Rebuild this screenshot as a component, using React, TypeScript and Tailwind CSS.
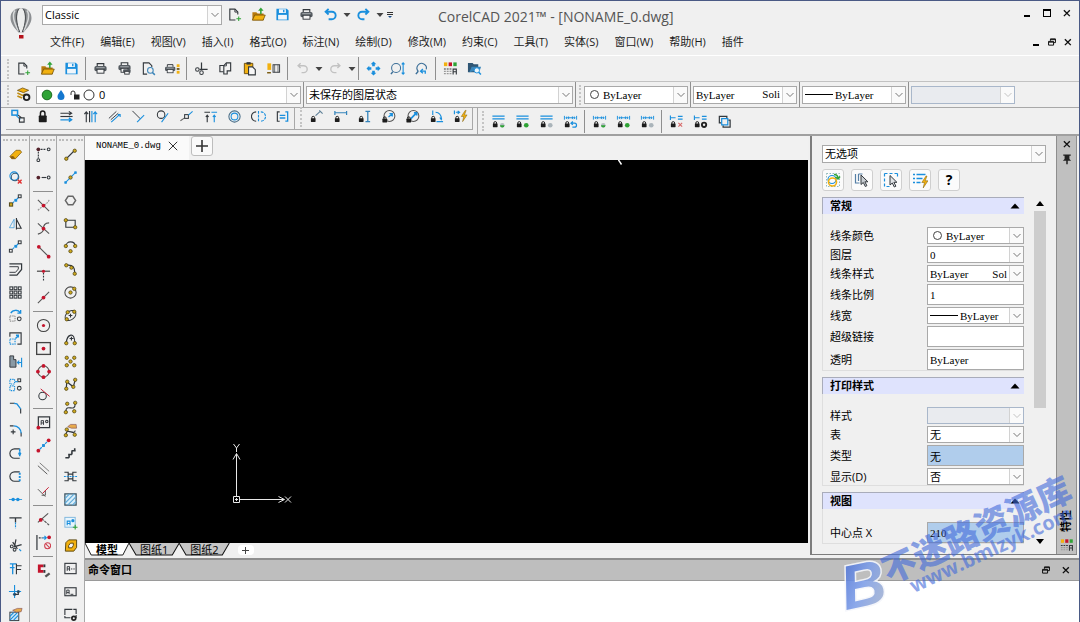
import React from "react";

const K = "#33383d";
const B = "#1a8fdd";
const G = "#2fa336";
const Y = "#f2b110";
const R = "#c4142c";

type StrokeProps = {
  d: string;
  c?: string;
  w?: number;
  f?: string;
  dash?: string;
};

const S = ({ d, c = K, w = 1.2, f = "none", dash }: StrokeProps) => (
  <path d={d} stroke={c} strokeWidth={w} fill={f} strokeDasharray={dash} />
);

const Dot = ({ x, y, c = R, r = 1.7 }: { x: number; y: number; c?: string; r?: number }) => (
  <circle cx={x} cy={y} r={r} fill={c} />
);

// gold grip used by the draw tools
const Au = ({ x, y }: { x: number; y: number }) => (
  <circle cx={x} cy={y} r={1.8} fill="#d0a91c" stroke="#4d4417" strokeWidth={0.8} />
);

const Ring = ({ x, y, c = K, r = 1.6 }: { x: number; y: number; c?: string; r?: number }) => (
  <circle cx={x} cy={y} r={r} fill="none" stroke={c} strokeWidth={1.1} />
);

const Lock = ({ x, y }: { x: number; y: number }) => (
  <g>
    <rect x={x} y={y + 2.4} width={5} height={4} rx={0.5} fill="#1d1d1d" />
    <path d={`M${x + 1} ${y + 3}v-1.2a1.5 1.5 0 0 1 3 0v1.2`} stroke="#1d1d1d" strokeWidth={1} fill="none" />
  </g>
);

const Sq = ({ x, y, c = K, s = 3 }: { x: number; y: number; c?: string; s?: number }) => (
  <rect x={x} y={y} width={s} height={s} fill="none" stroke={c} strokeWidth={1.1} />
);

const printer = (
  <>
    <S d="M4.5 5.5V2.8h7v2.7" />
    <rect x="1.5" y="5.3" width="13" height="5.6" rx="1.8" fill="#555b61" />
    <rect x="4.3" y="8.8" width="7.4" height="4.2" fill="#f4f4f4" stroke={K} />
    <S d="M3.5 7.2h9" c="#c9ced2" w={0.8} />
  </>
);

const half = (
  <>
    <circle cx="12" cy="12" r="2.4" fill="#b5bcc1" />
    <path d="M9.6 12a2.4 2.4 0 0 0 4.8 0z" fill={G} />
  </>
);

const dims = <S d="M1.5 2v4M14.5 2v4M3 4h10M6 2.6v2.8M10 2.6v2.8M4.4 2.8 3 4l1.4 1.2M11.6 2.8 13 4l-1.4 1.2" c={B} w={1} />;
const lines = <S d="M1.5 2.2h13M1.5 5.2h13" c={B} w={1.3} />;
const tree = <S d="M1.5 1.5v5M2 4h5M9.5 2.5h5M9.5 5.5h5" c={B} />;
const bolt = <path d="M13 1.5 8.8 8h2.6l-1.2 5.5L15 6.3h-2.8l1.8-4.8z" fill={Y} stroke="#7a5a08" strokeWidth={0.5} />;

const icons: Record<string, React.ReactNode> = {
  new: (
    <>
      <S d="M9 13.8H3V2.2h5.5l3 3V8" />
      <S d="M8.4 2.4v3h3" w={1} />
      <S d="M12.5 10v5M10 12.5h5" c={G} w={1.1} />
    </>
  ),
  open: (
    <>
      <path d="M1.5 14V5.5h4.2l1.3 1.4h6.5V14z" fill="#b87a0c" />
      <path d="M1.5 14 4 8.6h11.2L13 14z" fill={Y} stroke="#6b4c0c" strokeWidth={0.8} />
      <S d="M10.5 7.5V3" c={G} w={1.6} />
      <path d="M7.6 4 10.5.4 13.4 4z" fill={G} />
    </>
  ),
  save: (
    <>
      <path d="M1.5 1.8h11l2 2v10.4h-13z" fill={B} />
      <rect x="4.2" y="2.4" width="7.4" height="4" fill="#f0f6fb" />
      <rect x="8.6" y="3" width="1.5" height="2.6" fill={B} />
      <rect x="3.3" y="8.4" width="9.4" height="5" fill="#f0f6fb" />
    </>
  ),
  print: printer,
  batchprint: (
    <>
      <g transform="translate(0 -1)">{printer}</g>
      <rect x="6.5" y="8.8" width="8" height="3.8" rx="1" fill="#555b61" />
      <rect x="8.2" y="11" width="4.8" height="3" fill="#f4f4f4" stroke={K} />
    </>
  ),
  preview: (
    <>
      <S d="M6.5 14H2.5V2h6l3 3v1.5" />
      <Ring x={10} y={10} r={3} c="#3b84b8" />
      <S d="M12.2 12.2l2.6 2.6" c="#3b84b8" w={1.6} />
    </>
  ),
  printset: (
    <>
      <g transform="translate(-1.3 1.5) scale(.85)">{printer}</g>
      <rect x="12.5" y="3.5" width="3" height="3" fill={Y} />
      <rect x="12.5" y="7.5" width="3" height="2" fill="#6d5a28" />
      <rect x="12.5" y="10.5" width="3" height="3" fill={Y} />
    </>
  ),
  cut: (
    <>
      <S d="M8 1.5v8.2M6 9h8.5" w={1.3} />
      <Ring x={3.6} y={9} r={1.9} />
      <Ring x={8} y={12.4} r={1.9} />
    </>
  ),
  copy: (
    <>
      <S d="M6 11.5H2V4.8h4.4" />
      <S d="M6.2 13.8V5l2.8-3h4.5v8.5H9.8v3.3z" f="#f3f3f3" />
      <S d="M6.4 5.2H9V2.4" w={0.9} />
    </>
  ),
  paste: (
    <>
      <path d="M2.5 2.5h9v11h-9z" fill={Y} stroke="#6b4c0c" />
      <rect x="4.8" y="1.2" width="4.4" height="2.6" fill={K} />
      <S d="M7 6.2h4.2l3 3v5.6H7z" f="#f7f7f7" />
    </>
  ),
  paint: (
    <>
      <path d="M1.5 2.5h4v7h-4z" fill={Y} />
      <S d="M1.2 12.5h4" c="#7c5d13" w={1.6} />
      <rect x="7.5" y="4" width="7" height="8" fill="#eee" stroke={K} />
      <S d="M9.2 4v8M12.8 4v8" w={0.7} />
    </>
  ),
  undo: <S d="M6 2 2.8 5 6 8M3 5h6.5a4 4 0 0 1 0 8H6" c={B} w={2} />,
  redo: <S d="M10 2l3.2 3L10 8M13 5H6.5a4 4 0 0 0 0 8H9" c={B} w={2} />,
  undoOff: <S d="M6 2.5 3.3 5 6 7.5M3.3 5h6a3.6 3.6 0 0 1 0 7.4H7" c="#c2c2c2" w={1.5} />,
  redoOff: <S d="M10 2.5 12.7 5 10 7.5M12.7 5h-6a3.6 3.6 0 0 0 0 7.4H9" c="#c2c2c2" w={1.5} />,
  pan: (
    <path
      d="M8 .5l3 3H9.4v2.200H6.600V3.500H5zM8 15.500l-3-3h1.600v-2.200h2.800v2.200H11zM.5 8l3-3v1.600h2.200v2.800H3.500V11zM15.500 8l-3-3v1.600h-2.200v2.800h2.200V11z"
      fill={B}
    />
  ),
  zoomdyn: (
    <>
      <Ring x={6.5} y={7.5} r={4.8} c="#3c6f98" />
      <S d="M3 11.5 1 14" c="#3c6f98" w={1.6} />
      <S d="M14 2v12M12.5 3.5 14 2l1.5 1.5M12.5 12.5 14 14l1.500-1.500" c={B} />
    </>
  ),
  zoomprev: (
    <>
      <S d="M13 9A5 5 0 1 0 4.6 11" c="#3c6f98" />
      <S d="M4.5 11 2 14" c="#3c6f98" w={1.6} />
      <S d="M9.5 8.5 7 10.8 9.500 13M7.200 10.800H12v2.700" c={B} w={1.4} />
    </>
  ),
  props: (
    <>
      <rect x="1" y="1.5" width="3.6" height="4" fill={Y} />
      <rect x="6" y="1.5" width="3.6" height="4" fill={R} />
      <rect x="11" y="1.5" width="3.6" height="4" fill={G} />
      <S d="M1 8.5h8" dash="2 1" />
      <S d="M1 11h8M1 13.5h8" c="#999" dash="2 1" />
      <S d="M10.8 14.5V8.600h3.400v5.900M10.800 11.500h3.400" />
    </>
  ),
  explorer: (
    <>
      <path d="M1 12V2h5l1.2 1.500H12V7l-3 5z" fill="#2f5674" />
      <path d="M2.500 12 5 6h10l-1 3" fill="#3a86bb" />
      <circle cx="10.5" cy="10" r="2.8" fill="#eef6fb" stroke={B} />
      <S d="M12.500 12l2.300 2.500" c={B} w={1.6} />
    </>
  ),
  layers: (
    <>
      <path d="M7 1l6.500 2.500L8 6 1.500 3.600z" fill={Y} stroke="#6b4c0c" strokeWidth={0.8} />
      <S d="M1.500 6.500 7 9l3-1.200M1.500 9.500l5 2.300" c="#c08d12" w={1.8} />
      <circle cx="11.3" cy="11" r="3" fill="#eee" stroke="#222" strokeWidth={2} />
    </>
  ),
  gcoin: (
    <>
      <rect x="1" y="1.5" width="6" height="5" fill="none" stroke={B} strokeWidth={1.6} />
      <S d="M5 6.500 10 11" c={B} />
      <S d="M9 9.500h5v4.500H9zM7.500 6.500l4 3" />
    </>
  ),
  gfix: (
    <>
      <rect x="4" y="7" width="8.5" height="7" rx="0.8" fill="#1d1d1d" />
      <S d="M5.800 7.500V4.600a2.400 2.400 0 0 1 4.800 0v2.900" c="#1d1d1d" w={1.6} />
    </>
  ),
  ghor: (
    <>
      <S d="M1.500 4.500h12M10.500 2.500l3 2-3 2" />
      <S d="M1.500 8h13" />
      <S d="M1.500 11.500h12M10.500 9.500l3 2-3 2" c={B} w={1.4} />
    </>
  ),
  gver: (
    <>
      <S d="M3.500 14V3M1.500 5.500l2-2.500 2 2.500M7 2v12" />
      <S d="M9.500 2v12M13 14V3M11 5.500 13 3l2 2.500" c={B} />
    </>
  ),
  gpar: (
    <>
      <S d="M2 10 10 2.500M4 11.500l8-7" w={1} />
      <S d="M4.500 14 14 5.500M11.500 6H14v2.500" c={B} />
    </>
  ),
  gperp: (
    <>
      <S d="M1.500 2l8.500 8.500" w={1} />
      <S d="M6.500 14 14 6.500" c={B} />
    </>
  ),
  gtan: (
    <>
      <Ring x={6.5} y={6} r={4} />
      <S d="M7 14 14 4.500" c={B} />
    </>
  ),
  gsmooth: (
    <>
      <S d="M1.500 12.500 6 9.500" c="#666" />
      <Sq x={6} y={6} s={4} />
      <S d="M10 6.500 14.500 2.500" c={B} />
    </>
  ),
  gcol: (
    <>
      <S d="M1.500 3.500h6M4.500 14V6.500M3 8.500l1.500-2L6 8.500" />
      <S d="M9 3.500h6M12 14V6.500M10.500 8.500l1.500-2 1.500 2" c={B} />
    </>
  ),
  gconc: (
    <>
      <Ring x={8} y={8} r={6} c="#456b86" />
      <Ring x={8} y={8} r={3.6} c={B} />
    </>
  ),
  gsym: (
    <>
      <S d="M5.500 3A5 5 0 0 0 5.500 13" />
      <S d="M10.500 3a5 5 0 0 1 0 10M8 2v12" c={B} dash="3 1" />
    </>
  ),
  gequal: (
    <>
      <S d="M5 3H2.500v10H5" />
      <S d="M11 3h2.500v10H11M5 6.800h6M5 9.600h6" c={B} w={1.4} />
    </>
  ),
  calign: (
    <>
      <Lock x={2} y={7.5} />
      <S d="M7 7l5-4.500M11 1.500l3.500 3.500" c="#5d7f97" />
    </>
  ),
  clin: (
    <>
      <S d="M2 2v4.500M14.500 2v4.500M2 4h12.500" c="#3584bb" w={1.3} />
      <Lock x={2} y={7.5} />
    </>
  ),
  cvert: (
    <>
      <Lock x={2} y={7.5} />
      <S d="M9 2.500h5M9 13.500h5M11.500 2.500v11" c="#3584bb" w={1.4} />
    </>
  ),
  crad: (
    <>
      <Ring x={9} y={7.5} r={5.8} c="#555" />
      <S d="M8 8.500l3.500-3M9 5h3v3" c={B} w={1.4} />
      <Lock x={1.5} y={8} />
    </>
  ),
  cdia: (
    <>
      <Ring x={9} y={7.5} r={5.8} c="#555" />
      <S d="M6 10.500l6-6M9.500 4h3v3" c={B} w={1.8} />
      <Lock x={1.5} y={8} />
    </>
  ),
  cang: (
    <>
      <S d="M4 1.500v5M7 3.500c4 0 6 3 6.500 7.500M11.500 9l2 3M8 13.500h7" c={B} />
      <Lock x={2} y={7.5} />
    </>
  ),
  cconv: (
    <>
      <S d="M1.500 1.500v4M3 3.500h4M5 2l2 1.500L5 5" c={B} />
      <Lock x={2} y={7.5} />
      {bolt}
    </>
  ),
  l1: <>{lines}<Lock x={2} y={7.8} />{half}</>,
  l2: <>{lines}<Lock x={2} y={7.8} /><Dot x={12} y={12} c={G} r={2.5} /></>,
  l3: <>{lines}<Lock x={2} y={7.8} /><Dot x={12} y={12} c="#aab4ba" r={2.5} /></>,
  l4: <>{dims}<Lock x={2} y={7.8} /><S d="M10.500 8 8.500 9.800l2 1.800M8.800 9.800h3.500a2 2 0 0 1 0 4.200H10" c={B} w={1.3} /></>,
  d1: <>{dims}<Lock x={2} y={7.8} />{half}</>,
  d2: <>{dims}<Lock x={2} y={7.8} /><Dot x={12} y={12} c={G} r={2.5} /></>,
  d3: <>{dims}<Lock x={2} y={7.8} /><Dot x={12} y={12} c="#aab4ba" r={2.5} /></>,
  x1: <>{tree}<Lock x={2} y={7.8} /><S d="M10 9.500l4 4M14 9.500l-4 4" c="#d76a6a" /></>,
  x2: <>{tree}<Lock x={2} y={7.8} /><circle cx="11.8" cy="11.5" r="2.3" fill="#eee" stroke="#222" strokeWidth={2} /></>,
  x3: (
    <>
      <S d="M4.500 9.500H2.500v-7h8v2" w={1.3} />
      <S d="M12 6.500h2v7.500H6.500v-2" w={1.3} />
      <S d="M5 5h6.500v6.500H5z" c={B} w={1.3} />
    </>
  ),
  // modify column
  erase: (
    <>
      <path d="M2 10 8.500 3.500h4.500l1.500 2L8 12.500H4z" fill={Y} stroke="#7b5a10" strokeWidth={0.8} />
      <path d="M2 10l2 2.500h4l-2.500-3z" fill="#8a5c0c" />
    </>
  ),
  dup: (
    <>
      <Ring x={6.5} y={6.5} r={4.5} c={B} />
      <Ring x={7.5} y={7.5} r={4} c="#345d7a" />
      <S d="M10.500 10.500l4 4M14.500 10.500l-4 4" c="#e03030" w={1.5} />
    </>
  ),
  move: (
    <>
      <rect x="1.5" y="10.5" width="3.5" height="3.5" fill="#d0a91c" stroke="#4d4417" />
      <S d="M5 10.500 11 5" c={B} dash="2 1" />
      <rect x="6.8" y="6.3" width="3" height="3" fill={B} />
      <Sq x={11} y={2} />
    </>
  ),
  mirror: (
    <>
      <S d="M6.500 3.500v9h-5z" c="#4da3dc" w={0.9} />
      <S d="M9 2v12.500" />
      <S d="M9 3.500l5 9.500H9" />
    </>
  ),
  copyent: (
    <>
      <Sq x={1.5} y={11} />
      <S d="M5 10.500 11 5" c={B} dash="2 1" />
      <rect x="6.8" y="6.3" width="3" height="3" fill={B} />
      <Sq x={11} y={2} />
    </>
  ),
  offset: <><S d="M1.500 2h13v6l-5 6h-8" w={1.3} /><S d="M1.500 5h9.500v2.500L8 11H1.500" w={1} /></>,
  pattern: (
    <>
      {[2, 6.5, 11].map((x) => [2, 6.5, 11].map((y) => <Sq key={`${x}-${y}`} x={x} y={y} />))}
    </>
  ),
  rotate: (
    <>
      <S d="M3 5.500C5 1.500 11 1.500 13 5M13.500 2v3.500H10" c={B} w={1.4} />
      <S d="M2 8.500h5.500v5.500H2z" dash="1.5 1" c="#777" w={1} />
      <Ring x={12} y={11.5} r={2} />
    </>
  ),
  scale: (
    <>
      <S d="M2 6V2h12v12h-4" />
      <S d="M2 8.500h5.500V14H2z" dash="1.5 1" c={B} />
      <S d="M8 8l3-3M8.500 4.500H11V7" c={B} w={1.5} />
    </>
  ),
  stretch: (
    <>
      <path d="M2 2h4v4h2.500v8H2z" fill="#8a9aa5" stroke={K} />
      <S d="M10 9h4.500M12 7l-2 2 2 2M14.500 4v10" c={B} />
    </>
  ),
  align: (
    <>
      <S d="M2 2.500h5v5H2zM2 9.500h5v5H2z" c={B} dash="1.5 1" />
      <Sq x={10.5} y={2} />
      <Ring x={12} y={12} r={2} />
      <S d="M7.500 5h3" c={B} />
    </>
  ),
  chamfer: <><S d="M2 3.500h5M13.500 9v5.500" /><S d="M6.500 3.500l3 .5 4 5.500" c={B} w={1.4} /></>,
  fillet: <><S d="M2 3h4M14 10v4.500M5.500 7v5M3 9.500h5" /><S d="M6 3a8 8 0 0 1 8 8" c={B} w={1.4} /></>,
  weld: <><S d="M12.500 3H7A5 5 0 0 0 7 13h5.500" /><S d="M12.500 3v10" c={B} dash="3 2" w={1.6} /><Dot x={12.5} y={8} c={B} r={1.6} /></>,
  join: <><S d="M12.500 3H7A5 5 0 0 0 7 13h5.500" /><S d="M12.500 4v9" c={B} dash="2 1.5" w={2} /></>,
  split: <><S d="M1 8h14" c={B} w={0.9} /><Dot x={5.5} y={8} c={B} r={1.9} /><Dot x={10.5} y={8} c={B} r={1.9} /></>,
  extend: <><S d="M1.500 3h13M8 3v5" w={1.4} /><S d="M8 8v6.500" c={B} dash="2 1" /></>,
  trim: <><S d="M8.500 1.500 7 9M6 9.500 14.500 7M5 4.500l5 7" w={1.3} /><Ring x={4} y={9} r={1.5} /><Ring x={7} y={12.5} r={1.5} /><S d="M12 12l2 2" c={B} /></>,
  pedit: <><S d="M2 3h7M2 7h5M5 3v11" c={B} w={1.4} /><S d="M9 3v11M9 5h5.500M9 9h5" /></>,
  explode: <><S d="M7 1v14M1 8h13" c={B} w={1.2} /><Dot x={7} y={11} c="#235a80" /><Dot x={11} y={8} c="#235a80" /><S d="M7 11h4V8" /></>,
  hatched: (
    <>
      <rect x="2" y="5.5" width="9.5" height="9" fill="#cfe8f8" stroke={K} />
      <S d="M2 10l4-4M2 14l8-8M6 14l5-5" c={B} />
      <path d="M5 3.500l5-2h5l-1 3.500-5 .5z" fill="#e7aa4c" stroke="#855" strokeWidth={0.7} />
    </>
  ),
  // snap column
  track: (
    <>
      <Dot x={2.5} y={2.5} c="#54222b" r={2} />
      <Ring x={13.5} y={2.5} r={1.5} />
      <Ring x={2.5} y={14} r={1.5} />
      <S d="M5 2.500h6M2.500 5v7" dash="2 1" />
    </>
  ),
  from: <><Dot x={2.5} y={8} c="#54222b" r={2} /><S d="M6 8h5" /><Ring x={13.5} y={8} r={1.5} /></>,
  sint: <><S d="M2 2l12 12" c="#555" /><S d="M14 2c-1 3-3 4-6 6M2 13l5-4" c="#999" dash="2 1" /><Dot x={8} y={8} r={2} /></>,
  sapp: <><S d="M2 2.500l12 11M14 2c-5 0-6 3-6 6s-2 5-6 6" c="#555" /><Dot x={8} y={8} r={2} /></>,
  send: <><S d="M3 3l10 10" c="#555" /><Dot x={3} y={3} r={2} /><Dot x={13.5} y={13.5} r={2} /></>,
  smid: <><S d="M1 4.500h14" w={1.4} c="#555" /><S d="M8 6v9" dash="2 1.2" /><Dot x={8} y={4.5} /></>,
  snear: <><S d="M2 14 14 2" c="#555" /><Dot x={8} y={8} r={2} /></>,
  scen: <><Ring x={8} y={8} r={6.5} c="#444" /><Dot x={8} y={8} /></>,
  srect: <><rect x="0.7" y="1.7" width="14.6" height="12.6" fill="none" stroke="#444" strokeWidth={1.4} /><Dot x={8} y={8} r={2} /></>,
  squad: <><Ring x={8} y={8} r={6} c="#555" /><Dot x={8} y={2} r={2} /><Dot x={8} y={14} r={2} /><Dot x={2} y={8} r={2} /><Dot x={14} y={8} r={2} /></>,
  stan: <><Ring x={7} y={9.5} r={4} /><S d="M5 2l9.500 8" c={R} w={1} /></>,
  sins: (
    <>
      <S d="M2.500 2h12v11.500h-12z" w={1.3} />
      <S d="M5.500 10.500V6H8v4.500M5.500 8.500H8" w={1} />
      <Ring x={11.5} y={7} r={1.3} />
      <Dot x={2.5} y={13.5} r={2} />
    </>
  ),
  smidp: <><S d="M4 12l8-8" c={B} dash="3 1" /><rect x="6.5" y="6.5" width="3" height="3" fill={B} /><Dot x={2.5} y={13.5} r={2} /><Dot x={13.5} y={2.5} r={2} /></>,
  spar: <><S d="M2 5l10 9" c="#555" w={1} /><S d="M4 2l10 9" c="#777" w={1} /></>,
  sperp: <><S d="M2 5.500l8 8M10 7v5H6" c="#555" w={1} /><S d="M7 10l6.500-6.500" c={R} w={1} /></>,
  sext: <><S d="M2 11 13 1.500" c="#555" /><S d="M6 7l8 7" dash="3 1" c="#555" /><Dot x={5} y={8.5} r={2} /></>,
  snone: (
    <>
      <S d="M1 0v16" w={1.3} />
      <S d="M3 3h4" dash="2 1" />
      <S d="M7 3h4M9 1l2 2-2 2" c={B} />
      <Dot x={14} y={2.5} r={2} />
      <Ring x={12.4} y={11.5} r={3.2} c="#d04050" />
      <S d="M10.200 9.300l4.400 4.400" c="#d04050" />
    </>
  ),
  sset: (
    <>
      <S d="M8 3H3.500v6H8" c={R} w={3} />
      <rect x="8" y="1.5" width="2" height="3" fill={K} />
      <rect x="8" y="7.5" width="2" height="3" fill={K} />
      <S d="M10 14.500l4.500-3.500" c="#555" w={2.5} />
    </>
  ),
  // draw column
  line: <><S d="M4 12l8-8" /><Au x={3.5} y={12.5} /><Au x={12.5} y={4} /></>,
  xline: <><S d="M2 14 14 2" c={B} /><rect x="1.5" y="12" width="2.6" height="2.6" fill={B} /><rect x="12" y="1.5" width="2.6" height="2.6" fill={B} /><Au x={8} y={8} /></>,
  poly: <S d="M5.500 3.500h5l3 4.500-3 4.500h-5L2.500 8z" c="#666" w={1.5} />,
  rect: <><S d="M3 4.500h10v7.500H3z" /><Au x={3} y={4.5} /><Au x={13} y={12} /></>,
  arc: <><S d="M3 8C3 1.500 13 1.500 13 8" /><Au x={3} y={7.5} /><Au x={13} y={7.5} /><Au x={8} y={13} /></>,
  pline: <><S d="M3.500 3.500c8-1 9 3 9 8" /><Au x={3.5} y={3.5} /><Au x={9} y={6} /><Au x={12.5} y={12.5} /></>,
  circle: <><Ring x={8} y={8} r={6} c="#444" /><Au x={8} y={8} /><Au x={12} y={4} /></>,
  ellipse: (
    <>
      <ellipse cx="8" cy="8" rx="6.5" ry="4.5" transform="rotate(-40 8 8)" fill="none" stroke={K} />
      <S d="M8 6v4M6 8h4" />
      <Au x={5} y={4.5} />
      <Au x={12} y={4} />
      <Au x={4} y={12} />
    </>
  ),
  earc: <><S d="M3.500 13C4 3 13 0 12.500 13M9 6v4M7 8h4" /><Au x={3.5} y={13} /><Au x={12.5} y={13} /></>,
  points: <><Au x={4} y={4} /><Au x={12} y={4} /><Au x={8} y={8} /><Au x={4} y={12} /><Au x={12} y={12} /></>,
  p3d: <><S d="M3.500 12.500 4 5l7 5.500L13 3" w={1.3} /><Au x={3.5} y={12.5} /><Au x={13} y={3} /><Au x={11} y={10.5} /><Au x={4.5} y={5} /></>,
  spline: <><S d="M3 12.500C3 3 13 14 13 4" /><Au x={3} y={13} /><Au x={4.5} y={4} /><Au x={12} y={12} /><Au x={13} y={3} /></>,
  espline: (
    <>
      <path d="M5 4l3-2.500h6l.5 4H9z" fill="#e7aa4c" stroke="#855" strokeWidth={0.7} />
      <S d="M3 12.500C4 4 12 14 13 8" />
      <Au x={3} y={13} />
      <Au x={12.5} y={12.5} />
      <Au x={4} y={7} />
    </>
  ),
  stairs: <S d="M2.500 12.500h4M5.500 9h4M9 5h4.500M6.500 12.500V9.500M9.500 9V5.500M12.500 5V2.500" w={1.7} />,
  mline: <><S d="M1.500 3.500h4v2h5v-2h4M1.500 12.500h4v-2h5v2h4M5.500 5.500v5M10.500 5.500v5" w={1.2} /><S d="M1 8h14" c={B} dash="2 1" /></>,
  hatch: <><rect x="2" y="2" width="12" height="12" fill="#d9effb" stroke="#37505f" strokeWidth={1.3} /><S d="M2 7l5-5M2 12 12 2M5 14l9-9M10 14l4-4" c="#5fa9d8" /></>,
  attr: <><rect x="2" y="2.5" width="11" height="10.5" fill="#e8f5fd" stroke="#7db6dc" /><S d="M4.500 11V6.500h3V11M4.500 9h3" c={B} /><Dot x={10.5} y={6} c={B} /><S d="M13 10.500v5M10.500 13h5" c={G} /></>,
  region: <><path d="M3 5l3-3h8.500v8l-3 4H2.500z" fill={Y} stroke="#5a4610" /><path d="M6 8l2-2.500h3V8l-1.500 2.500H6z" fill="#f5f5f5" stroke="#5a4610" /></>,
  note: <><rect x="2" y="2.5" width="12" height="11" fill="none" stroke={K} strokeWidth={1.2} /><S d="M4.500 10.500V6H7v4.500M4.500 8.500H7" w={1} /><S d="M8.500 8.500h4" dash="1.5 1" w={1} /></>,
  text: <><rect x="2" y="4" width="12" height="8.5" fill="none" stroke={K} strokeWidth={1.2} /><S d="M4 11V6.500h2.500V11M4 9h2.500M8 11h3" w={1} /></>,
  maskc: <><rect x="2" y="2.5" width="12" height="9" fill="none" stroke={K} strokeWidth={1.2} strokeDasharray="8 1" /><circle cx="11.5" cy="12" r="2" fill="#eee" stroke="#222" strokeWidth={1.8} /></>,
  // properties panel
  pick: (
    <>
      <S d="M1.500 1.500h13v13h-13z" c="#7aa" dash="1.5 1.5" w={0.8} />
      <Ring x={7} y={7.5} r={4} c={B} />
      <circle cx="7.5" cy="10" r="4" fill="none" stroke={Y} strokeWidth={1.6} />
      <S d="M9 2.500c3 0 4 1.500 4 4M10.500 5l2.500 2L15 4.500" c={G} w={1.5} />
    </>
  ),
  sel1: <><S d="M1.500 2v9h4M4.500 2v7M4.500 2h4" c="#557fa6" /><path d="M7 3v9.500l2.300-2 2 4 1.600-.8-2-3.900h3z" fill="#c9ced3" stroke={K} /></>,
  sel2: <><S d="M1.500 1.500h13M1.500 1.500v13h5M14.500 1.500v5" c={B} dash="3 2" /><path d="M7 3.500V13l2.300-2 2 4 1.600-.8-2-3.900h3z" fill="#e0e3e6" stroke={K} /></>,
  sel3: <><S d="M1 2.500h2M4.500 2.500h9M1 6.500h2M4.500 6.500h6M1 10.500h2M4.500 10.500h4" c={B} w={1.3} /><g transform="translate(1 2.5)">{bolt}</g></>,
  restore: <S d="M5.500 6V3h8v6h-3M5.500 4.200h8M2.500 7h8v6h-8zM2.500 8.200h8" c="#111" w={1.6} />,
  close: <S d="M3 3.500l9.500 9.500M12.500 3.500 3 13" c="#111" w={2.2} />,
  pin: <path d="M3 2h10v1.800h-1.800V8l2.300 2.200H9V15H7v-4.800H2.500L4.800 8V3.800H3z" fill="#222" />,
};

const Icon = ({ name, className = "size-4" }: { name: string; className?: string }) => (
  <svg viewBox="0 0 16 16" className={`shrink-0 ${className}`} aria-hidden="true">
    {icons[name]}
  </svg>
);

const Tool = ({ name }: { name: string }) => (
  <button aria-label={name} className="flex h-[23px] w-6 shrink-0 items-center justify-center">
    <Icon name={name} className="size-[15px]" />
  </button>
);

const Caret = ({ label }: { label: string }) => (
  <button aria-label={label} className="flex h-[23px] w-[9px] items-center justify-center">
    <svg viewBox="0 0 8 8" className="size-2 shrink-0">
      <path d="M.5 2h7L4 6z" fill="#444" />
    </svg>
  </button>
);

const Divider = () => (
  <span className="flex w-[5px] justify-center self-stretch">
    <span className="w-px bg-[#8f8f8f]" />
  </span>
);

const Grip = () => <span className="mx-px h-5 w-[3px] border-l-2 border-dotted border-[#c4c4c4]" />;

// a list of icon names; "|" draws a divider
const Tools = ({ names }: { names: string[] }) => (
  <div className="flex items-center">
    {names.map((n, i) => (n === "|" ? <Divider key={i} /> : <Tool key={i} name={n} />))}
  </div>
);

type ComboProps = {
  id?: string;
  label?: string;
  value: string;
  before?: React.ReactNode;
  after?: string;
  disabled?: boolean;
  className?: string;
  text?: string;
};

const Combo = ({ id, label, value, before, after, disabled, className = "", text = "text-[11px]" }: ComboProps) => (
  <div
    className={`flex items-center border ${disabled ? "border-[#a9b7ca] bg-[#e9ebef]" : "border-[#a9a9a9] bg-white"} ${className}`}
  >
    {before}
    <select
      id={id}
      aria-label={label}
      disabled={disabled}
      className={`h-full min-w-0 flex-1 appearance-none bg-transparent pl-0.5 leading-4 text-black outline-none ${text}`}
    >
      <option>{value}</option>
    </select>
    {after && <span className="mr-0.5 font-['Liberation_Serif',serif] text-[11px]">{after}</span>}
    <span className="pointer-events-none flex w-3.5 shrink-0 items-center justify-center self-stretch border-l border-[#d2d2d2] bg-[#fafafa]">
      <svg viewBox="0 0 10 10" className="size-2.5">
        <path d="M1.5 3L5 6.500 8.500 3" fill="none" stroke={disabled ? "#c4c4c4" : "#777"} />
      </svg>
    </span>
  </div>
);

const serif = "font-['Liberation_Serif','Noto_Sans_CJK_SC',serif] text-[11px]";

const Rule = <span className="ml-0.5 h-px w-7 shrink-0 bg-black" />;
const Swatch = <span className="mr-0.5 ml-[5px] size-[9px] shrink-0 rounded-full border border-[#444]" />;

const menus = [
  "文件(F)", "编辑(E)", "视图(V)", "插入(I)", "格式(O)", "标注(N)", "绘制(D)",
  "修改(M)", "约束(C)", "工具(T)", "实体(S)", "窗口(W)", "帮助(H)", "插件",
];

const modifyTools = [
  "erase", "dup", "move", "mirror", "copyent", "offset", "pattern", "rotate", "scale", "stretch", "align",
  "chamfer", "fillet", "weld", "join", "split", "extend", "trim", "pedit", "explode", "hatched",
];
const snapTools = [
  "track", "from", "|", "sint", "sapp", "send", "smid", "snear", "|", "scen", "srect", "squad", "stan", "|",
  "sins", "smidp", "spar", "sperp", "|", "sext", "snone", "|", "sset",
];
const drawTools = [
  "line", "xline", "poly", "rect", "arc", "pline", "circle", "ellipse", "earc", "points", "p3d",
  "spline", "espline", "stairs", "mline", "hatch", "attr", "region", "note", "text", "maskc",
];

const SideBar = ({ names, className }: { names: string[]; className: string }) => (
  <div className={`flex shrink-0 flex-col items-center border-r border-[#a8a8a8] ${className}`}>
    <span className="mt-[3px] mb-0.5 h-0.5 w-6 shrink-0 border-t-2 border-dotted border-[#bcbcbc]" />
    {names.map((n, i) =>
      n === "|" ? (
        <span key={i} className="my-0.5 h-px w-5 shrink-0 bg-[#8f8f8f]" />
      ) : (
        <Tool key={i} name={n} />
      )
    )}
  </div>
);

const WindowButtons = ({ second = false }: { second?: boolean }) => (
  <div className={`ml-auto flex items-center ${second ? "gap-1 pr-[5px]" : "gap-2 pr-1.5 pb-1"}`}>
    <button aria-label="最小化" className="flex size-3 items-end justify-center pb-0.5">
      <span className="h-0.5 w-1.5 bg-black" />
    </button>
    <button aria-label="还原" className="flex size-3 items-center justify-center">
      {second ? <Icon name="restore" className="size-2.5" /> : <span className="size-2 border border-t-2 border-black" />}
    </button>
    <button aria-label="关闭" className="flex size-3 items-center justify-center">
      <Icon name="close" className="size-2.5" />
    </button>
  </div>
);

const Header = () => (
  <header className="flex h-[55px] shrink-0 border-b border-white pl-2">
    <svg viewBox="0 0 24 34" className="mt-1.5 h-[34px] w-6 shrink-0" aria-hidden="true">
      <path d="M12 1C5 1 1.500 5.500 1.500 11c0 6 5 11 8 14.500h5c3-3.500 8-8.500 8-14.500C22.500 5.500 19 1 12 1z" fill="#8c8f92" />
      <path d="M12 1C8.500 3 8 7 8 12s1.500 10 3 13.500h2c1.500-3.500 3-8.500 3-13.500s-.5-9-4-11z" fill="#eceded" />
      <path d="M6 3.500C3.500 7 3.500 13 9.500 24M18 3.500c2.500 3.500 2.500 9.500-3.500 20.500" stroke="#d8dadb" strokeWidth="1.500" fill="none" />
      <path d="M9.500 2c-3 5-2.500 14 1.200 23M14.500 2c3 5 2.500 14-1.200 23" stroke="#4a4d50" strokeWidth="1" fill="none" />
      <rect x="10" y="28" width="4.500" height="3.500" fill="#b5121b" />
    </svg>
    <div className="flex min-w-0 flex-1 flex-col pl-[9px]">
      <div className="flex h-7 items-center">
        <Combo label="工作区" value="Classic" className="h-5 w-[180px]" />
        <Tools names={["new", "open", "save", "print", "undo"]} />
        <Caret label="撤消列表" />
        <Tool name="redo" />
        <Caret label="重做列表" />
        <svg viewBox="0 0 8 8" className="ml-0.5 size-2">
          <path d="M1 1.500h6M1 3.500h6" stroke="#333" />
          <path d="M2 5h4L4 7z" fill="#1a4f8a" />
        </svg>
        <h1 className="ml-11 pt-1 text-sm whitespace-nowrap text-[#555]">CorelCAD 2021™ - [NONAME_0.dwg]</h1>
        <WindowButtons />
      </div>
      <nav className="flex h-[27px] items-center pl-2">
        {menus.map((m) => (
          <button key={m} className="mr-4 text-[11px] leading-4 whitespace-nowrap text-[#1c1c1c]">
            {m}
          </button>
        ))}
        <WindowButtons second />
      </nav>
    </div>
  </header>
);

const LayerBar = () => (
  <div className="flex h-[26px] shrink-0 items-center border-b border-[#a8a8a8] pl-[5px]">
    <Grip />
    <Tool name="layers" />
    <Combo
      label="图层"
      value="0"
      className="ml-px h-[18px] w-[265px]"
      before={
        <svg viewBox="0 0 58 16" className="ml-0.5 h-4 w-[58px] shrink-0">
          <circle cx="8" cy="8" r="4.800" fill={G} stroke="#1b6b20" />
          <path d="M22 3c2 3 3.500 4.500 3.500 6.500a3.500 3.500 0 0 1-7 0C18.500 7.500 20 6 22 3z" fill="#1477cf" />
          <path d="M32 8V6a2 2 0 0 1 4 0v2" fill="none" stroke="#333" />
          <rect x="35" y="7.500" width="5.500" height="5" fill="#222" />
          <circle cx="50" cy="8" r="5" fill="#fff" stroke="#333" />
        </svg>
      }
    />
    <Divider />
    <Combo label="图层状态" value="未保存的图层状态" className="h-[18px] w-[267px]" />
    <Divider />
    <Grip />
    <Combo label="线条颜色" value="ByLayer" before={Swatch} text={serif} className="ml-px h-[18px] w-[104px]" />
    <Divider />
    <Combo label="线条样式" value="ByLayer" after="Soli" text={serif} className="h-[18px] w-[104px]" />
    <Divider />
    <Combo label="线宽" value="ByLayer" before={Rule} text={serif} className="h-[18px] w-[104px]" />
    <Divider />
    <Combo label="打印样式" value="" disabled className="h-[18px] w-[104px]" />
  </div>
);

type Field = {
  name: string;
  value: string;
  kind: "combo" | "input";
  before?: React.ReactNode;
  after?: string;
  off?: boolean;
  blue?: boolean;
};

const sections: { title: string; fields: Field[] }[] = [
  {
    title: "常规",
    fields: [
      { name: "线条颜色", value: "ByLayer", kind: "combo", before: Swatch },
      { name: "图层", value: "0", kind: "combo" },
      { name: "线条样式", value: "ByLayer", kind: "combo", after: "Sol" },
      { name: "线条比例", value: "1", kind: "input" },
      { name: "线宽", value: "ByLayer", kind: "combo", before: Rule },
      { name: "超级链接", value: "", kind: "input" },
      { name: "透明", value: "ByLayer", kind: "input" },
    ],
  },
  {
    title: "打印样式",
    fields: [
      { name: "样式", value: "", kind: "combo", off: true },
      { name: "表", value: "无", kind: "combo" },
      { name: "类型", value: "无", kind: "input", blue: true },
      { name: "显示(D)", value: "否", kind: "combo" },
    ],
  },
  { title: "视图", fields: [{ name: "中心点 X", value: "210", kind: "input", blue: true }] },
];

const Section = ({ title, fields }: { title: string; fields: Field[] }) => (
  <section className="mb-1.5">
    <button className="flex h-[17px] w-full items-center justify-between border-t border-l border-[#a9acba] bg-[#dfe3fd] pr-1 pl-[7px] text-[11px] font-bold">
      {title}
      <svg viewBox="0 0 10 6" className="h-1.5 w-2.5">
        <path d="M5 .5 9.500 5.500H.5z" fill="#000" />
      </svg>
    </button>
    <div className="flex flex-col gap-0.5 border-b border-l border-[#dedede] pt-[13px] pl-[7px]">
      {fields.map((f) => (
        <div key={f.name} className="flex items-center justify-between text-[11px] leading-4">
          <label htmlFor={f.name}>{f.name}</label>
          {f.kind === "combo" ? (
            <Combo
              id={f.name}
              value={f.value}
              before={f.before}
              after={f.after}
              disabled={f.off}
              text={serif}
              className="h-[17px] w-[97px]"
            />
          ) : (
            <input
              id={f.name}
              defaultValue={f.value}
              className={`h-[21px] w-[97px] border border-[#a9a9a9] pl-0.5 outline-none ${serif} ${f.blue ? "bg-[#b0cdec]" : "bg-white"}`}
            />
          )}
        </div>
      ))}
    </div>
  </section>
);

const Properties = () => (
  <aside className="mr-0.5 mb-[3px] flex w-[267px] shrink-0 border-b border-l-2 border-[#7d7d7d]">
    <div className="flex min-w-0 flex-1 flex-col pt-[9px] pr-2.5 pl-2.5">
      <Combo label="选择集" value="无选项" className="h-[18px] shrink-0" />
      <div className="flex gap-[7px] py-1.5">
        {["pick", "sel1", "sel2", "sel3", "help"].map((n) => (
          <button
            key={n}
            aria-label={n}
            className="flex size-[22px] items-center justify-center rounded-[3px] border border-[#cfcfcf] bg-[#fbfbfb] text-sm font-bold"
          >
            {n === "help" ? "?" : <Icon name={n} />}
          </button>
        ))}
      </div>
      <div className="flex min-h-0 flex-1 pb-2.5">
        <div className="min-w-0 flex-1 overflow-hidden">
          {sections.map((s) => (
            <Section key={s.title} {...s} />
          ))}
        </div>
        <div className="ml-2.5 flex w-3 flex-col items-center justify-between pt-1">
          <svg viewBox="0 0 8 5" className="h-[5px] w-2 shrink-0">
            <path d="M4 0l4 5H0z" fill="#000" />
          </svg>
          <div className="mt-[5px] w-full flex-1">
            <div className="h-3/5 bg-[#cdcdcd]" />
          </div>
          <svg viewBox="0 0 8 5" className="h-[5px] w-2 shrink-0">
            <path d="M4 5l4-5H0z" fill="#000" />
          </svg>
        </div>
      </div>
    </div>
    <div className="flex w-[21px] shrink-0 flex-col items-center border-x border-[#8e8e8e] bg-[#c0c0c0] pt-[3px]">
      <button aria-label="关闭">
        <Icon name="close" className="size-2.5" />
      </button>
      <button aria-label="固定" className="mt-1">
        <Icon name="pin" className="size-3" />
      </button>
      <span className="mt-auto rotate-180 text-[11px] font-bold [text-orientation:sideways] [writing-mode:vertical-rl]">
        特性
      </span>
      <Icon name="props" className="mt-1.5 mb-0.5 size-3.5" />
    </div>
  </aside>
);

const SheetTab = ({ name, active = false }: { name: string; active?: boolean }) => (
  <button className={`relative h-[13px] px-[11px] text-[11px] leading-[13px] ${active ? "font-bold" : ""}`}>
    <svg viewBox="0 0 50 13" preserveAspectRatio="none" className="absolute inset-0 size-full">
      <path d="M0 0l7 12h36l7-12" fill={active ? "#fff" : "#c6c6c6"} stroke="#111" />
    </svg>
    <span className="relative">{name}</span>
  </button>
);

const Drawing = () => (
  <div className="flex min-w-0 flex-1 flex-col">
    <div className="flex h-6 shrink-0 items-center bg-[#f1f1f1]">
      <div className="flex h-full items-center bg-[#fafafa] pr-2.5 pb-1 pl-[11px]">
        <span className="font-['Liberation_Mono',monospace] text-[9px] leading-3 text-black">NONAME_0.dwg</span>
        <button aria-label="关闭图纸" className="ml-1.5 p-px">
          <svg viewBox="0 0 10 10" className="size-2.5">
            <path d="M.8.8l8.400 8.400M9.200.8.8 9.200" stroke="#333" />
          </svg>
        </button>
      </div>
      <button
        aria-label="新建图纸"
        className="mb-1 ml-0.5 flex h-5 w-[22px] items-center justify-center rounded-[3px] border border-[#bdbdbd] bg-[#fafafa]"
      >
        <svg viewBox="0 0 12 12" className="size-3">
          <path d="M6 0v12M0 6h12" stroke="#333" strokeWidth="1.600" />
        </svg>
      </button>
    </div>
    <div className="relative flex-1 bg-black">
      <svg viewBox="0 0 70 70" className="absolute bottom-[33px] left-36 size-[70px]" fill="none" stroke="#e8e8e8">
        <path d="M4.500 56.500h6v6h-6zM7.500 58v3M6 59.500h3" />
        <path d="M7.500 56.500V14M4 19.500l3.500-6 3.500 6M11 59.500h44M49.500 56.500l6 3-6 3" />
        <path d="M56 56.500l6 6M62 56.500l-6 6M4.500 4l3 4 3-4M7.500 8v4" />
      </svg>
      <svg viewBox="0 0 5 5" className="absolute top-0 left-[533px] size-[5px]">
        <path d="M.5 0l3 4.500" stroke="#fff" strokeWidth="1.500" />
      </svg>
    </div>
    <div className="flex h-[15px] shrink-0 items-start">
      <SheetTab name="模型" active />
      <SheetTab name="图纸1" />
      <SheetTab name="图纸2" />
      <button aria-label="新建布局" className="mt-0.5 ml-2 flex h-[10px] w-4 items-center justify-center rounded-sm bg-white">
        <svg viewBox="0 0 7 7" className="size-[7px]">
          <path d="M3.500 0v7M0 3.500h7" stroke="#444" />
        </svg>
      </button>
    </div>
  </div>
);

const Watermark = () => (
  <div className="pointer-events-none absolute right-0 bottom-0 h-[170px] w-[246px] text-[#4069da]/60">
    <svg viewBox="0 0 60 70" className="absolute bottom-0 left-0 h-[70px] w-[60px] overflow-visible">
      <defs>
        <linearGradient id="mark" x1="0" y1="0" x2="1" y2="1">
          <stop offset="0" stopColor="#3d63d0" />
          <stop offset="0.5" stopColor="#7f9fe8" />
          <stop offset="1" stopColor="#b4bcc8" />
        </linearGradient>
      </defs>
      <text
        x="8"
        y="54"
        fontFamily="Liberation Sans, sans-serif"
        fontSize="62"
        fontStyle="italic"
        fill="url(#mark)"
        stroke="#f4f6fb"
        strokeWidth="3"
        paintOrder="stroke"
        fontWeight="bold"
        transform="rotate(-12 30 35)"
        opacity="0.9"
      >
        B
      </text>
    </svg>
    <span className="absolute bottom-[34px] left-[58px] origin-bottom-left -rotate-25 text-[34px] leading-[34px] font-black whitespace-nowrap">
      不迷路资源库
    </span>
    <span className="absolute bottom-[26px] left-[82px] origin-bottom-left -rotate-25 text-xl leading-5 font-bold whitespace-nowrap">
      www.bmlzyk.com
    </span>
  </div>
);

export default function App() {
  return (
    <div className="relative flex h-screen min-h-[400px] flex-col overflow-hidden border-x border-t border-[#4a5a85] bg-[#f0f0f0] font-['Open_Sans','Noto_Sans_CJK_SC',sans-serif] text-black">
      <Header />
      <div className="flex h-[26px] shrink-0 items-center border-b border-[#c2c2c2] pl-[5px]">
        <Grip />
        <Tools
          names={["new", "open", "save", "|", "print", "batchprint", "preview", "printset", "|", "cut", "copy", "paste", "paint", "|", "undoOff"]}
        />
        <Caret label="撤消" />
        <Tool name="redoOff" />
        <Caret label="重做" />
        <Tools names={["|", "pan", "zoomdyn", "zoomprev", "|", "props", "explorer"]} />
      </div>
      <LayerBar />
      <div className="flex h-7 shrink-0 items-start border-b-2 border-[#a0a0a0] pl-[5px]">
        <div className="flex h-[22px] items-center border-r border-b border-[#a8a8a8] pb-1">
          <Tools names={["gcoin", "gfix", "ghor", "gver", "gpar", "gperp", "gtan", "gsmooth", "gcol", "gconc", "gsym", "gequal"]} />
        </div>
        <div className="flex h-[22px] items-center border-r border-b border-[#a8a8a8] pb-1 pl-1">
          <Grip />
          <Tools names={["calign", "clin", "cvert", "crad", "cdia", "cang", "cconv"]} />
        </div>
        <div className="ml-1 flex h-[26px] items-center border-l border-[#a8a8a8] pl-[3px]">
          <Grip />
          <Tools names={["l1", "l2", "l3", "l4", "|", "d1", "d2", "d3", "|", "x1", "x2", "x3"]} />
        </div>
      </div>
      <div className="flex min-h-0 flex-1">
        <SideBar names={modifyTools} className="w-[29px]" />
        <SideBar names={snapTools} className="w-[27px]" />
        <SideBar names={drawTools} className="w-7" />
        <div className="flex min-w-0 flex-1 flex-col">
          <div className="flex min-h-0 flex-1 gap-0.5">
            <Drawing />
            <Properties />
          </div>
          <section className="h-16 shrink-0 border-t-2 border-[#8e8e8e] bg-white">
            <div className="flex h-[21px] items-center justify-between border-b border-[#9a9a9a] bg-[#bebebe] pr-2 pl-[3px]">
              <h2 className="text-[11px] font-bold">命令窗口</h2>
              <div className="flex gap-2.5">
                <button aria-label="还原命令窗口">
                  <Icon name="restore" className="size-2.5" />
                </button>
                <button aria-label="关闭命令窗口">
                  <Icon name="close" className="size-2.5" />
                </button>
              </div>
            </div>
          </section>
        </div>
      </div>
      <Watermark />
    </div>
  );
}
